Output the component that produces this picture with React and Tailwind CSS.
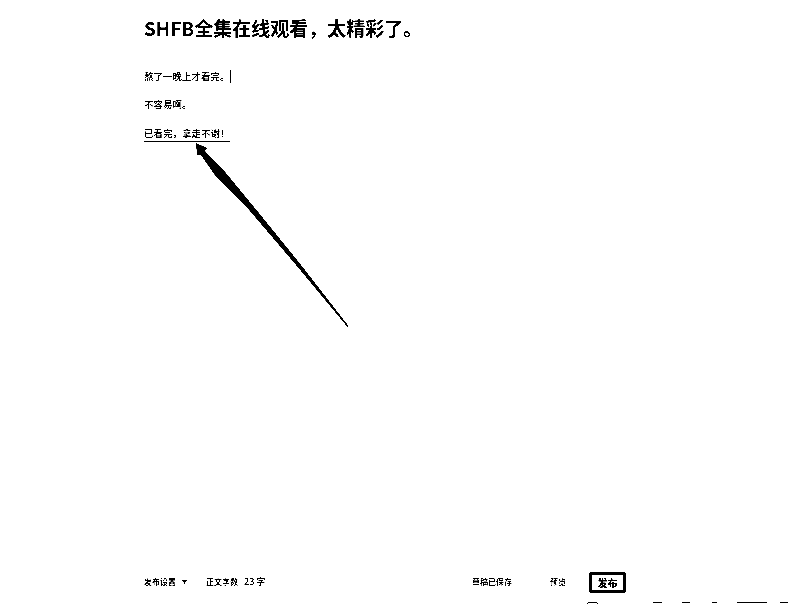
// Article editor page
const cjk = "font-['Noto_Sans_CJK_SC','Noto_Sans',sans-serif]";

export default function App() {
    return (
        <div className={`w-[800px] h-[604px] overflow-hidden flex flex-col bg-white text-black contrast-[8] ${cjk}`}>
            {/* Editor column */}
            <main className="flex-1 pl-[144px] pt-[14px]">
                <h1 className="text-[19px] leading-[28px] font-bold">{"SHFB全集在线观看\uFF0C太精彩了。"}</h1>

                <div className="mt-[27px] text-[9.5px] leading-[14px] font-medium">
                    <p className="flex items-center">
                        熬了一晚上才看完。
                        <span className="inline-block w-px h-[13px] bg-black"></span>
                    </p>
                    <p className="mt-[14px]">不容易啊。</p>
                    <p className="mt-[15px] pb-[1px] w-[86px] border-b border-black">{"已看完\uFF0C拿走不谢\uFF01"}</p>
                </div>

                {/* Hand-drawn arrow */}
                <svg className="ml-[48px] mt-[1px]" width="160" height="186" viewBox="0 0 160 186">
                    <path d="M4 0 L15 5 L13 8 L34 30 L64.5 67 L107.5 120 L156.5 183 L155.5 184 L104 122 L58 68 L22 31 L9 12 L5 12 Z" fill="black" />
                </svg>
            </main>

            {/* Footer toolbar */}
            <footer className="h-[34px] shrink-0 pl-[144px] flex items-start text-[8px] leading-[12px] font-medium">
                <div className="w-[62px] mt-[8px] flex items-center gap-[6px]">
                    发布设置
                    <svg width="5" height="4" viewBox="0 0 5 4"><path d="M0 0 L5 0 L2.5 4 Z" fill="black" /></svg>
                </div>
                <div className="w-[266px] mt-[8px] flex gap-[6px]">
                    <span>正文字数</span>
                    <span className="text-[9px]">23 字</span>
                </div>
                <div className="w-[78px] mt-[8px]">草稿已保存</div>
                <div className="w-[39px] mt-[8px]">预览</div>
                <button className="mt-[4px] w-[37px] h-[21px] border-[3px] border-black bg-white text-black text-[10px] leading-[15px] font-black rounded-[2px]">发布</button>
            </footer>

            {/* Next row, cut off by the window edge */}
            <div className="h-[2px] shrink-0 pl-[586px] flex items-start">
                <span className="w-[13px] h-[6px] border border-black rounded-[3px]"></span>
                <span className="ml-[54px] w-[9px] h-px bg-black"></span>
                <span className="ml-[20px] w-[8px] h-px bg-black"></span>
                <span className="ml-[22px] w-[5px] h-px bg-black"></span>
                <span className="ml-[20px] w-[30px] h-px bg-black"></span>
                <span className="ml-[13px] w-[8px] h-px bg-black"></span>
            </div>
        </div>
    );
}
